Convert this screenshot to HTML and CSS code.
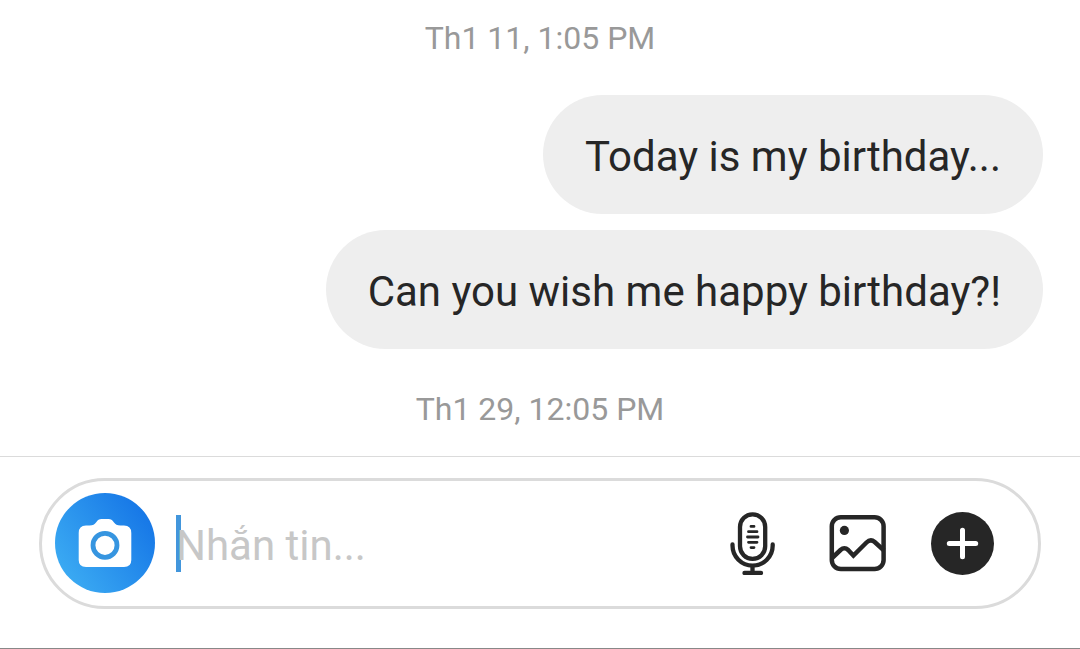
FILE: index.html
```html
<!DOCTYPE html>
<html lang="vi">
<head>
    <meta charset="UTF-8">
    <meta name="viewport" content="width=device-width, initial-scale=1.0">
    <title>Direct</title>
    <link rel="stylesheet" href="styles.css">
</head>
<body>
    <main class="messages">
        <time class="timestamp">Th1 11, 1:05 PM</time>
        <p class="bubble">Today is my birthday...</p>
        <p class="bubble">Can you wish me happy birthday?!</p>
        <time class="timestamp">Th1 29, 12:05 PM</time>
    </main>

    <footer class="footer">
        <form class="composer">
            <button type="button" class="camera-btn" aria-label="Camera">
                <svg viewBox="0 0 100 100">
                    <path fill="#fff" d="M31 32.500H34.500C38 32.500 39.500 31.500 41 29.500C43 26.800 44 26 46.500 26H53.500C56 26 57 26.800 59 29.500C60.500 31.500 62 32.500 65.500 32.500H69Q76.300 32.500 76.300 40V67Q76.300 74 69 74H31Q23.700 74 23.700 67V40Q23.700 32.500 31 32.500Z"/>
                    <circle cx="50" cy="52.300" r="12" fill="none" stroke="#3695e0" stroke-width="4.800"/>
                </svg>
            </button>
            <input type="text" class="message-input" placeholder="Nhắn tin..." aria-label="Nhắn tin">
            <div class="actions">
                <button type="button" class="icon-btn" aria-label="Voice message">
                    <svg viewBox="0 0 63 63" fill="none" stroke="#262626" stroke-width="4.300" stroke-linecap="round">
                        <rect x="19" y="2.300" width="25.200" height="44.600" rx="12.600"/>
                        <path d="M11.500 32.500V33.500A20.100 20.100 0 0 0 51.700 33.500V32.500M31.500 54V60M23.500 61H40"/>
                        <path stroke-width="2.800" d="M30 14.400H33M27.500 19.700H36M26.500 25H37M27.500 30.300H36M30 35.600H33"/>
                    </svg>
                </button>
                <button type="button" class="icon-btn" aria-label="Photo">
                    <svg viewBox="0 0 63 63" fill="none" stroke="#262626" stroke-width="4.500">
                        <rect x="5.800" y="5.300" width="51.800" height="51.800" rx="9"/>
                        <circle cx="18.400" cy="18.400" r="4.600" fill="#262626" stroke="none"/>
                        <path d="M5.600 46.500L14.500 38Q18.400 34.500 22.200 38L27.400 43.500L40.500 30.500Q44.600 26.600 48.700 30L58 38.500"/>
                    </svg>
                </button>
                <button type="button" class="icon-btn" aria-label="More">
                    <svg viewBox="0 0 63 63">
                        <circle cx="31.500" cy="31.500" r="31.500" fill="#262626"/>
                        <path d="M31.500 18.300V44.700M18.300 31.500H44.700" stroke="#fff" stroke-width="5" stroke-linecap="round"/>
                    </svg>
                </button>
            </div>
        </form>
    </footer>
</body>
</html>
```
FILE: styles.css
```css
* {
    box-sizing: border-box;
}

body {
    margin: 0;
    min-height: 100vh;
    display: flex;
    flex-direction: column;
    background-color: #fff;
    border-bottom: 1px solid #888;
    font-family: Roboto, Arial, sans-serif;
    color: #262626;
}

.messages {
    flex: 1;
    display: flex;
    flex-direction: column;
    align-items: flex-end;
    gap: 16px;
    padding: 18px 37px 27px;
}

.timestamp {
    align-self: center;
    font-size: 32px;
    line-height: 40px;
    color: #999;
}

.timestamp:first-child {
    margin-bottom: 21px;
}

.timestamp:last-child {
    margin-top: 24px;
}

.bubble {
    margin: 0;
    padding: 37px 42px 32px;
    border-radius: 60px;
    background-color: #eee;
    font-size: 42px;
    line-height: 50px;
}

.footer {
    padding: 21px 39px 39px;
    border-top: 1px solid #dbdbdb;
}

.composer {
    display: flex;
    align-items: center;
    padding: 12px 44px 13px 13px;
    border: 3px solid #dbdbdb;
    border-radius: 66px;
}

button {
    padding: 0;
    border: none;
    background: none;
    cursor: pointer;
}

svg {
    display: block;
    width: 100%;
}

.camera-btn {
    flex: none;
    width: 100px;
    height: 100px;
    border-radius: 50%;
    background: linear-gradient(55deg, #3cacf3 10%, #1575e6 90%);
}

/* the blue bar is the text cursor, it sits behind the placeholder */
.message-input {
    flex: 1;
    min-width: 0;
    height: 64px;
    margin: 0 21px;
    padding: 5px 0 0;
    border: none;
    outline: none;
    background: linear-gradient(#4296dc, #4296dc) no-repeat left center / 5px 57px;
    font-family: inherit;
    font-size: 42px;
    color: #262626;
}

.message-input::placeholder {
    color: #c7c7c7;
    opacity: 1;
}

.actions {
    display: flex;
    gap: 42px;
}

.icon-btn {
    width: 63px;
    height: 63px;
}
```
